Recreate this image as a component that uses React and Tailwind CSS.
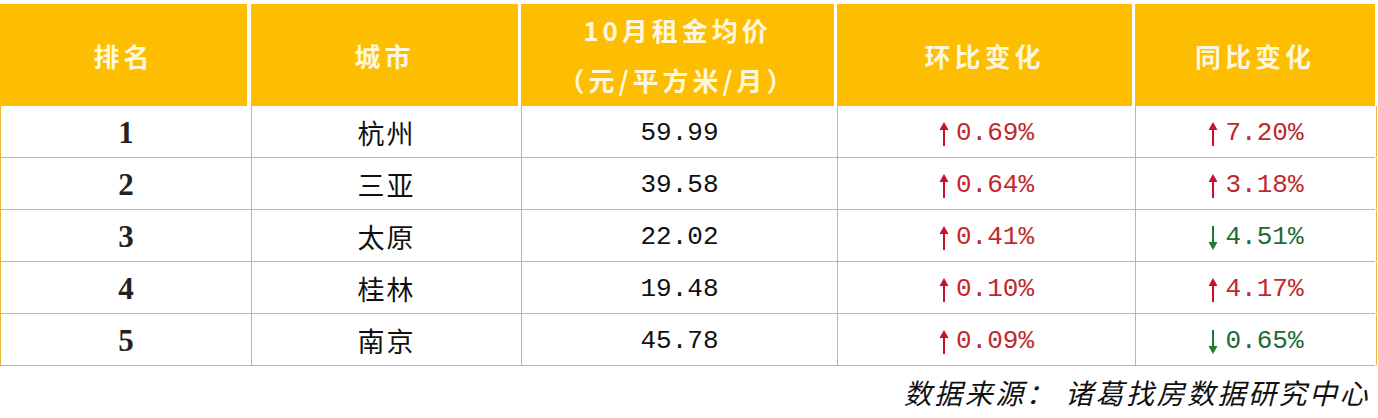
import React from 'react';

const rows = [
  { rank: '1', city: '杭州', price: '59.99', mom: ['up', '0.69%'], yoy: ['up', '7.20%'] },
  { rank: '2', city: '三亚', price: '39.58', mom: ['up', '0.64%'], yoy: ['up', '3.18%'] },
  { rank: '3', city: '太原', price: '22.02', mom: ['up', '0.41%'], yoy: ['down', '4.51%'] },
  { rank: '4', city: '桂林', price: '19.48', mom: ['up', '0.10%'], yoy: ['up', '4.17%'] },
  { rank: '5', city: '南京', price: '45.78', mom: ['up', '0.09%'], yoy: ['down', '0.65%'] },
];

const cjk = { fontFamily: '"Noto Sans CJK SC", sans-serif' };
const mono = { fontFamily: '"Liberation Mono", "Noto Sans CJK SC", monospace' };

function Arrow({ dir }) {
  const color = dir === 'up' ? '#c8102e' : '#1f7a2e';
  return (
    <svg width="10" height="26" viewBox="0 0 10 26" className="mr-[7px]">
      {dir === 'up' ? (
        <>
          <path d="M5 1 L9.5 9 L0.5 9 Z" fill={color} />
          <line x1="5" y1="8" x2="5" y2="25" stroke={color} strokeWidth="2" />
        </>
      ) : (
        <>
          <line x1="5" y1="1" x2="5" y2="18" stroke={color} strokeWidth="2" />
          <path d="M5 25 L9.5 17 L0.5 17 Z" fill={color} />
        </>
      )}
    </svg>
  );
}

function Change({ v }) {
  const [dir, val] = v;
  return (
    <div className="flex items-center justify-center">
      <Arrow dir={dir} />
      <span
        className={`text-[26px] ${dir === 'up' ? 'text-[#c0282d]' : 'text-[#1e6b35]'}`}
        style={mono}
      >
        {val}
      </span>
    </div>
  );
}

const cols = 'grid grid-cols-[251px_270px_316px_298px_240px]';

export default function App() {
  return (
    <div className="w-[1378px] h-[418px] bg-white pt-[4px] overflow-hidden" style={cjk}>
      <div className={`${cols} h-[102px] text-[#fff7dc] font-bold text-[26px] tracking-[4px]`}>
        <div className="bg-[#fdbd00] border-r-[4px] border-white flex items-center justify-center">排名</div>
        <div className="bg-[#fdbd00] border-r-[3px] border-white flex items-center justify-center">城市</div>
        <div className="bg-[#fdbd00] border-r-[3px] border-white flex flex-col items-center justify-center leading-[50px]">
          <div>10月租金均价</div>
          <div>（元/平方米/月）</div>
        </div>
        <div className="bg-[#fdbd00] border-r-[3px] border-white flex items-center justify-center">环比变化</div>
        <div className="bg-[#fdbd00] flex items-center justify-center">同比变化</div>
      </div>
      <div className="w-[1375px] border-l border-[#e6b73a]">
        {rows.map((r) => (
          <div key={r.rank} className={`${cols} h-[52px] border-b border-[#e6b73a]`}>
            <div className="border-r border-[#e6b73a] flex items-center justify-center pt-1 text-[31px] font-bold text-[#222]" style={{ fontFamily: '"Liberation Serif", serif' }}>
              {r.rank}
            </div>
            <div className="border-r border-[#e6b73a] flex items-center justify-center pt-1 text-[27px] tracking-[2px] text-[#111]">
              {r.city}
            </div>
            <div className="border-r border-[#e6b73a] flex items-center justify-center pt-1 text-[26px] text-[#111]" style={mono}>
              {r.price}
            </div>
            <div className="border-r border-[#e6b73a] flex items-center justify-center pt-1">
              <Change v={r.mom} />
            </div>
            <div className="border-r border-[#e6b73a] flex items-center justify-center pt-1 -mr-px">
              <Change v={r.yoy} />
            </div>
          </div>
        ))}
      </div>
      <div className="flex justify-end pr-[8px] pt-[5px]">
        <span className="italic text-[28px] tracking-[2.5px] text-[#111]">数据来源： 诸葛找房数据研究中心</span>
      </div>
    </div>
  );
}
